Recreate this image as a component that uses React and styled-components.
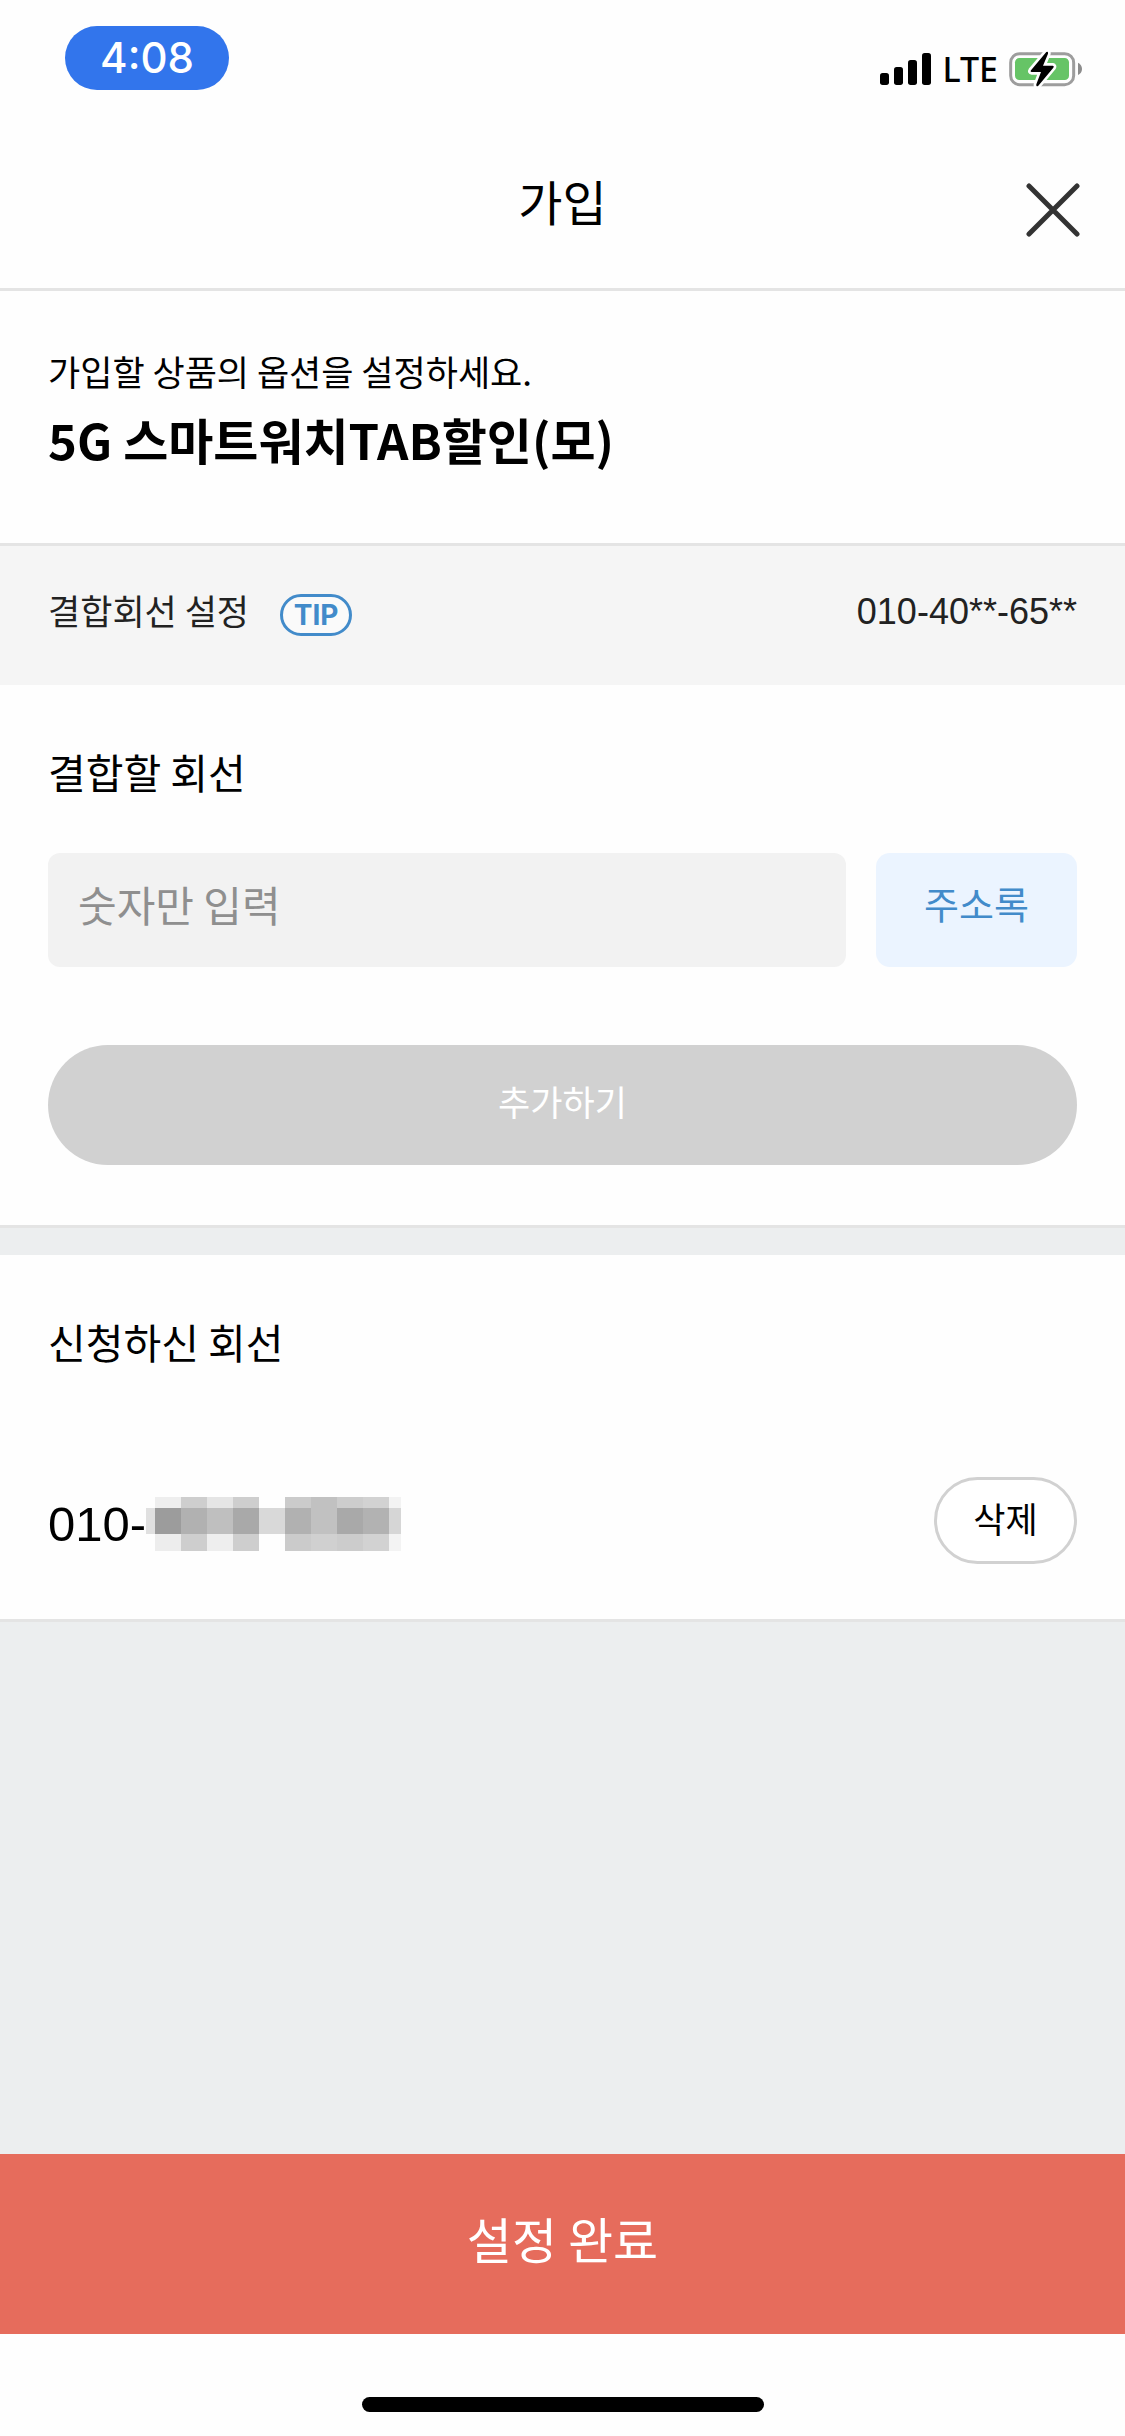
import React, { useState } from 'react';
import styled, { createGlobalStyle } from 'styled-components';

const mosaicColumns = [
  { x: 0, w: 9, tones: ['#fefefe', '#e0e0e0', '#fefefe'] },
  { x: 9, w: 26, tones: ['#eeeeee', '#9c9c9c', '#ededed'] },
  { x: 35, w: 26, tones: ['#cecece', '#b1b1b1', '#cecece'] },
  { x: 61, w: 26, tones: ['#e5e5e5', '#bfbfbf', '#eeeeee'] },
  { x: 87, w: 26, tones: ['#cecece', '#a9a9a9', '#cecece'] },
  { x: 113, w: 26, tones: ['#fefefe', '#d9d9d9', '#fefefe'] },
  { x: 139, w: 26, tones: ['#cbcbcb', '#b1b1b1', '#cbcbcb'] },
  { x: 165, w: 26, tones: ['#c1c1c1', '#c1c1c1', '#d0d0d0'] },
  { x: 191, w: 26, tones: ['#cdcdcd', '#a9a9a9', '#cccccc'] },
  { x: 217, w: 26, tones: ['#d2d2d2', '#b2b2b2', '#d2d2d2'] },
  { x: 243, w: 12, tones: ['#f3f3f3', '#d6d6d6', '#f3f3f3'] },
];

const mosaicRows = [
  { y: 0, h: 11 },
  { y: 11, h: 26 },
  { y: 37, h: 17 },
];

const SignalIcon = () => (
  <svg width="51" height="32" viewBox="0 0 153 96" aria-hidden="true">
    <rect x="0" y="60" width="27" height="36" rx="8" />
    <rect x="42" y="42" width="27" height="54" rx="8" />
    <rect x="84" y="21" width="27" height="75" rx="8" />
    <rect x="126" y="0" width="27" height="96" rx="8" />
  </svg>
);

const BatteryIcon = () => (
  <svg width="74" height="36" viewBox="507 93 222 108" aria-hidden="true">
    <rect x="512" y="101" width="189" height="93" rx="27" fill="none" stroke="#9d9d9d" strokeWidth="9" />
    <rect x="525" y="114" width="162" height="66" rx="13" fill="#66c466" />
    <path d="M714 128c7 3 12 10 12 19s-5 15-12 18z" fill="#8c8c8c" />
    <path
      d="M619 96L573 151Q570 156 575 156H603L589 193Q588 202 595 197L640 143Q643 138 638 137H609L624 101Q625 93 619 96Z"
      fill="#000"
      stroke="#fefefe"
      strokeWidth="16"
      strokeLinejoin="round"
      paintOrder="stroke"
    />
  </svg>
);

const CloseIcon = () => (
  <svg width="54" height="54" viewBox="0 0 54 54" aria-hidden="true">
    <path d="M3 3L51 51M51 3L3 51" stroke="#333" strokeWidth="5" strokeLinecap="round" />
  </svg>
);

const MaskedDigits = () => (
  <svg width="255" height="54" viewBox="0 0 255 54" shapeRendering="crispEdges" aria-hidden="true">
    {mosaicColumns.map((col) =>
      mosaicRows.map((row, i) => (
        <rect key={`${col.x}-${row.y}`} x={col.x} y={row.y} width={col.w} height={row.h} fill={col.tones[i]} />
      ))
    )}
  </svg>
);

const App = () => {
  const [lineNumber, setLineNumber] = useState('');

  const handleChange = (e) => {
    setLineNumber(e.target.value.replace(/[^0-9]/g, ''));
  };

  return (
    <>
      <GlobalStyle />
      <Page>
        <StatusBar>
          <TimePill>4:08</TimePill>
          <StatusIcons>
            <SignalIcon />
            <Network>LTE</Network>
            <BatteryIcon />
          </StatusIcons>
        </StatusBar>

        <Header>
          <HeaderTitle>가입</HeaderTitle>
          <CloseButton type="button" aria-label="닫기">
            <CloseIcon />
          </CloseButton>
        </Header>

        <Intro>
          <IntroText>가입할 상품의 옵션을 설정하세요.</IntroText>
          <ProductName>5G 스마트워치TAB할인(모)</ProductName>
        </Intro>

        <SettingBar>
          <span>결합회선 설정</span>
          <TipButton type="button">TIP</TipButton>
          <SettingValue>010-40**-65**</SettingValue>
        </SettingBar>

        <Section as="form" $bottom={60} onSubmit={(e) => e.preventDefault()}>
          <SectionTitle as="label" htmlFor="line">결합할 회선</SectionTitle>
          <InputRow>
            <LineInput
              id="line"
              type="tel"
              value={lineNumber}
              onChange={handleChange}
              placeholder="숫자만 입력"
            />
            <ContactsButton type="button">주소록</ContactsButton>
          </InputRow>
          <AddButton type="submit" disabled={!lineNumber}>추가하기</AddButton>
        </Section>

        <Gap />

        <Section $bottom={55}>
          <SectionTitle>신청하신 회선</SectionTitle>
          <LineRow>
            <PhoneNumber>
              010-
              <MaskedDigits />
            </PhoneNumber>
            <DeleteButton type="button">삭제</DeleteButton>
          </LineRow>
        </Section>

        <Filler />

        <SubmitButton type="button">설정 완료</SubmitButton>
        <HomeArea>
          <HomeIndicator />
        </HomeArea>
      </Page>
    </>
  );
};

export default App;

const GlobalStyle = createGlobalStyle`
  * {
    box-sizing: border-box;
  }

  body {
    margin: 0;
    background: #fefefe;
    color: #000;
    font-family: "Noto Sans CJK KR", sans-serif;
    font-size: 35px;
  }

  button, input {
    margin: 0;
    padding: 0;
    border: 0;
    font: inherit;
  }

  svg {
    display: block;
    flex: none;
  }
`;

const Page = styled.div`
  display: flex;
  flex-direction: column;
  min-height: 100vh;
`;

const StatusBar = styled.div`
  display: flex;
  justify-content: space-between;
  align-items: flex-end;
  padding: 26px 42px 42px 65px;
`;

const TimePill = styled.div`
  width: 164px;
  border-radius: 32px;
  background: #3275ec;
  color: #fff;
  font-family: Inter, sans-serif;
  font-size: 42px;
  font-weight: 500;
  line-height: 64px;
  text-align: center;
`;

const StatusIcons = styled.div`
  display: flex;
  align-items: center;
  gap: 11px;
  height: 42px;
`;

const Network = styled.span`
  font-family: "Noto Sans", sans-serif;
  font-size: 34px;
  font-weight: 500;
  line-height: 42px;
`;

const Header = styled.header`
  display: grid;
  grid-template-columns: 1fr auto 1fr;
  align-items: end;
  padding: 32px 45px 51px;
  border-bottom: 3px solid #e4e4e4;
`;

const HeaderTitle = styled.h1`
  grid-column: 2;
  margin: 0;
  font-size: 48px;
  font-weight: 400;
  line-height: 73px;
`;

const CloseButton = styled.button`
  justify-self: end;
  background: none;
`;

const Intro = styled.section`
  padding: 53px 48px 63px;
  border-bottom: 3px solid #e4e4e4;
`;

const IntroText = styled.p`
  margin: 0;
  line-height: 54px;
`;

const ProductName = styled.h2`
  margin: 0;
  font-size: 49px;
  font-weight: 700;
  line-height: 82px;
`;

const SettingBar = styled.section`
  display: flex;
  align-items: flex-end;
  padding: 38px 48px 49px;
  background: #f5f5f5;
  color: #222;
  line-height: 52px;
`;

const TipButton = styled.button`
  width: 72px;
  height: 42px;
  margin-left: 31px;
  border: 3px solid #428bca;
  border-radius: 21px;
  background: #fafafa;
  color: #428bca;
  font-family: Inter, sans-serif;
  font-size: 28px;
  font-weight: 700;
  line-height: 36px;
`;

const SettingValue = styled.span`
  margin-left: auto;
  font-family: "Liberation Sans", sans-serif;
  font-size: 36px;
  line-height: 48px;
`;

const Section = styled.section`
  display: flex;
  flex-direction: column;
  padding: 56px 48px ${(props) => props.$bottom}px;
  border-bottom: 3px solid #e4e4e4;
`;

const SectionTitle = styled.h3`
  margin: 0;
  font-size: 41px;
  font-weight: 400;
  line-height: 60px;
`;

const InputRow = styled.div`
  display: flex;
  gap: 30px;
  margin: 52px 0 78px;
`;

const LineInput = styled.input`
  flex: 1;
  min-width: 0;
  height: 114px;
  padding: 0 30px 14px;
  border-radius: 12px;
  background: #f2f2f2;
  font-size: 42px;

  &::placeholder {
    color: #8f8f8f;
    opacity: 1;
  }
`;

const ContactsButton = styled.button`
  width: 201px;
  padding-bottom: 15px;
  border-radius: 14px;
  background: #ebf4ff;
  color: #428bca;
  font-size: 38px;
`;

const AddButton = styled.button`
  height: 120px;
  padding-bottom: 9px;
  border-radius: 60px;
  background: #d1d1d1;
  color: #fff;
`;

const Gap = styled.div`
  height: 27px;
  background: #eceeef;
`;

const LineRow = styled.div`
  display: flex;
  justify-content: space-between;
  align-items: center;
  margin-top: 106px;
`;

const PhoneNumber = styled.div`
  display: flex;
  align-items: center;
  padding-top: 6px;
  font-family: "Liberation Sans", sans-serif;
  font-size: 49px;
  line-height: 80px;
`;

const DeleteButton = styled.button`
  width: 143px;
  height: 87px;
  padding-bottom: 6px;
  border: 3px solid #d1d1d1;
  border-radius: 44px;
  background: #fff;
  color: #000;
`;

const Filler = styled.div`
  flex: 1;
  background: #eceeef;
`;

const SubmitButton = styled.button`
  height: 180px;
  padding-bottom: 13px;
  background: #e66c5c;
  color: #fff;
  font-size: 49px;
`;

const HomeArea = styled.div`
  display: flex;
  justify-content: center;
  padding: 63px 0 24px;
`;

const HomeIndicator = styled.div`
  width: 402px;
  height: 15px;
  border-radius: 8px;
  background: #000;
`;
